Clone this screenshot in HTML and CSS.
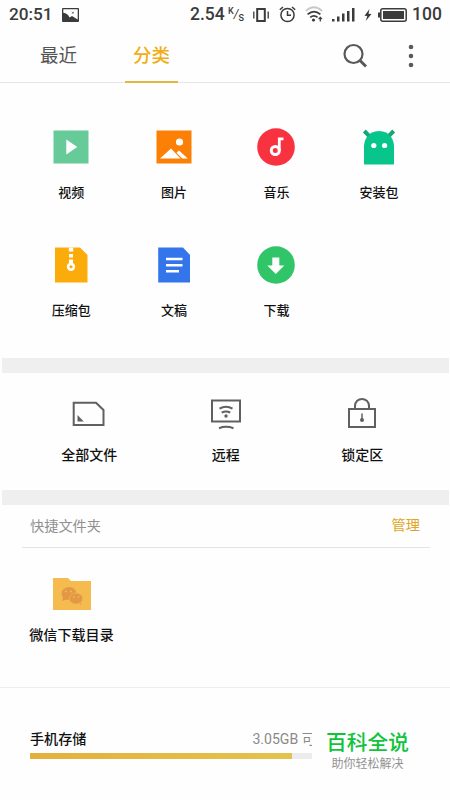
FILE: index.html
```html
<!DOCTYPE html>
<html lang="zh-CN">
<head>
<meta charset="utf-8">
<title>文件管理</title>
<link rel="stylesheet" href="styles.css">
</head>
<body>
<header class="status">
  <span class="clock">20:51</span>
  <svg class="shot" width="17" height="14" viewBox="0 0 17 14"><path fill="#3b3b3b" fill-rule="evenodd" d="M1 0h15q1 0 1 1v12q0 1-1 1H1q-1 0-1-1V1q0-1 1-1zM1.300 1.300v3.500c3 .2 5 2 6.200 4.600l2.500-1.500 5.700 3.500V1.300zM9 3.200l1.600 1.300-1.100.8 2 .2.200-2-.8.700z"/></svg>
  <span class="speed">2.54</span>
  <span class="unit"><sup>K</sup><i>/</i><sub>S</sub></span>
  <svg class="vibrate" width="16" height="16" viewBox="0 0 16 16" fill="none" stroke="#3b3b3b"><path stroke-width="2" d="M4.200 2h7.600v12H4.200z"/><path stroke-width="1.300" d="M.8 4.500v7M15.200 4.500v7"/></svg>
  <svg class="alarm" width="17" height="17" viewBox="0 0 17 17" fill="none" stroke="#3b3b3b" stroke-width="1.500"><circle cx="8.500" cy="9" r="6.600"/><path d="M8.500 5v4.300h3.500M.8 3.800 4 1M16.200 3.800 13 1"/></svg>
  <svg class="wifi" width="19" height="17" viewBox="0 0 19 17" fill="none" stroke="#3b3b3b" stroke-width="1.700"><path stroke="#c8c8c8" d="M.8 5q8-7.500 16.400 0"/><path d="M2.600 8.400q6.400-5.500 12.800 0M5.200 11.400q3.800-3 7.300 0"/><circle cx="8.500" cy="14" r="1.600" fill="#3b3b3b" stroke="none"/><path stroke-width="1.200" d="M15.300 15.500v-4M13.600 13.200l1.700-1.900 1.700 1.900"/></svg>
  <svg class="signal" width="23" height="15" viewBox="0 0 23 15" fill="#3b3b3b"><path d="M0 12h2.500v2.500H0zM5 9.500h2.500v5H5zM10 6.500h2.500v8H10zM15 4h2.500v10.500H15zM20 1h2.500v13.500H20z"/></svg>
  <svg class="bolt" width="8" height="12" viewBox="0 0 8 12"><path fill="#3b3b3b" d="M5.500 0 .5 6.800l2.800.2L1.700 12 7.500 5l-3-.3z"/></svg>
  <svg class="battery" width="29" height="14" viewBox="0 0 29 14"><rect x="2.800" y=".8" width="25.400" height="12.400" rx="2" fill="none" stroke="#3b3b3b" stroke-width="1.500"/><path fill="#3b3b3b" d="M5 3h21v8H5zM0 4.500h2v5H0z"/></svg>
  <span class="percent">100</span>
</header>
<nav class="tabs">
  <span class="tab recent">最近</span>
  <span class="tab active">分类</span>
  <svg class="search" width="26" height="26" viewBox="0 0 26 26" fill="none" stroke="#595959"><circle cx="11.500" cy="11" r="9" stroke-width="2.200"/><path d="m18 17.500 6 6" stroke-width="3"/></svg>
  <svg class="more" width="6" height="24" viewBox="0 0 6 24" fill="#595959"><circle cx="3" cy="3" r="2.300"/><circle cx="3" cy="12" r="2.300"/><circle cx="3" cy="21" r="2.300"/></svg>
</nav>
<section class="grid">
  <div class="cell"><svg width="40" height="40" viewBox="0 0 40 40"><path fill="#66ca99" d="M2.500 3.500h35v33h-35z"/><path fill="#fff" d="M15.300 12.500v15l11-7.500z"/></svg><span>视频</span></div>
  <div class="cell"><svg width="40" height="40" viewBox="0 0 40 40"><path fill="#fc8005" d="M2.500 3.500h35v33h-35z"/><g fill="#fff"><circle cx="25.500" cy="15" r="3.600"/><path d="m6 31.500 11-10 9.500 10zM22.500 25.800l2.500-2.300 8.800 8h-5.500z"/></g></svg><span>图片</span></div>
  <div class="cell"><svg width="40" height="40" viewBox="0 0 40 40"><circle cx="20" cy="20" r="18.800" fill="#f9323f"/><g fill="none" stroke="#fff" stroke-width="3"><circle cx="19.300" cy="23.500" r="4"/><path d="M23.300 24V11.800h4.200" stroke-width="2.800"/></g></svg><span>音乐</span></div>
  <div class="cell"><svg width="40" height="40" viewBox="0 0 40 40"><path fill="#08c58b" d="M5 37.500V19.500C5 13 9 4 20 4s15 9 15 15.500v18z"/><path stroke="#16a779" stroke-width="4" d="m5.300 4 4.500 4.700M34.700 4l-4.500 4.700"/><g fill="#fff"><circle cx="14.800" cy="18.500" r="2.600"/><circle cx="25.600" cy="18.500" r="2.600"/></g></svg><span>安装包</span></div>
  <div class="cell"><svg width="40" height="40" viewBox="0 0 40 40"><path fill="#fbac0b" d="M4 2.500h25l7.500 7.500v27.500H4z"/><g fill="#fff"><path d="M17.800 2.500h4.400v4h-4.400zM18 9h4v3.500h-4zM18 14.500h4v4h-4z"/><circle cx="20" cy="21.800" r="4.200"/></g><circle cx="20" cy="21.800" r="1.500" fill="#fbac0b"/></svg><span>压缩包</span></div>
  <div class="cell"><svg width="40" height="40" viewBox="0 0 40 40"><path fill="#3475eb" d="M4.200 2.500H29l7 7.500v27.500H4.200z"/><path fill="#fff" d="M12 12.800h16.500v2.500H12zM12 19h16.500v2.500H12zM12 25h13v2.500H12z"/></svg><span>文稿</span></div>
  <div class="cell"><svg width="40" height="40" viewBox="0 0 40 40"><circle cx="20" cy="20" r="18.800" fill="#31c56a"/><path fill="#fff" d="M16.300 12.500h7v8h5L19.800 29l-8.500-8.500h5z"/></svg><span>下载</span></div>
</section>
<div class="band"></div>
<section class="tools">
  <div class="tool"><svg width="36" height="36" viewBox="0 0 36 36"><path d="M2.700 6.700h22.300l7.500 7.300v15H2.700z" fill="none" stroke="#606060" stroke-width="2"/><path fill="#606060" d="M6.500 19v6.500h6.300z"/></svg><span>全部文件</span></div>
  <div class="tool"><svg width="36" height="36" viewBox="0 0 36 36" fill="none" stroke="#606060" stroke-width="2"><path d="M4 4.500h28v21H4zM11 32.200q7-2.800 14.500 0"/><path d="M11.500 12.700q6.500-4 13 0M13.700 16.700q4.300-2.500 8.600 0"/><circle cx="18" cy="20" r="1.700" fill="#606060" stroke="none"/></svg><span>远程</span></div>
  <div class="tool"><svg width="36" height="36" viewBox="0 0 36 36" fill="none" stroke="#606060" stroke-width="2"><path d="M5 13h26v18H5zM11 13v-3c0-9.500 14-9.500 14 0v3"/><path stroke-width="1.500" d="M18 17.500V24"/><circle cx="18" cy="24" r="2" fill="#606060" stroke="none"/></svg><span>锁定区</span></div>
</section>
<div class="band"></div>
<section class="shortcuts">
  <div class="head"><span>快捷文件夹</span><span class="manage">管理</span></div>
  <div class="folder">
    <svg width="38" height="32" viewBox="0 0 38 32"><path fill="#f5bb4f" d="M0 0h15l3 3h20v29H0z"/><g fill="#e29845"><ellipse cx="16" cy="15.500" rx="7.500" ry="6.500"/><path d="m10 18-.5 5 5-2zM25 23l3 4v-5z"/><ellipse cx="23" cy="20.500" rx="6.800" ry="5.600" stroke="#f5bb4f" stroke-width=".7"/></g><g fill="#f5bb4f"><circle cx="13" cy="13.500" r="1"/><circle cx="18" cy="13.500" r="1"/><circle cx="21" cy="19" r=".8"/><circle cx="25.500" cy="19" r=".8"/></g></svg>
    <span>微信下载目录</span>
  </div>
</section>
<section class="storage">
  <div class="row"><span>手机存储</span><span class="free">3.05GB 可用</span></div>
  <div class="bar"><div class="used"></div></div>
  <div class="mark"><span class="brand">百科全说</span><span class="slogan">助你轻松解决</span></div>
</section>
</body>
</html>
```

FILE: styles.css
```css
* { box-sizing: border-box; }
body {
  margin: 0;
  width: 450px;
  height: 800px;
  overflow: hidden;
  background: #fefefe;
  color: #111;
  font-family: Roboto, "Noto Sans CJK SC", sans-serif;
}
svg { display: block; flex: none; }
.status {
  display: flex;
  align-items: center;
  height: 29px;
  padding-left: 9px;
  color: #3b3b3b;
  font-size: 17.500px;
  font-weight: 500;
  line-height: 29px;
  white-space: nowrap;
}
.clock { width: 53px; font-size: 17.200px; }
.speed { width: 38px; margin-left: 111px; }
.unit { display: flex; width: 17px; height: 20px; font-size: 10px; line-height: 10px; }
.unit sup, .unit sub { font-size: 9px; line-height: 10px; vertical-align: baseline; }
.unit sup { padding-top: 1px; }
.unit i { font-size: 12px; font-weight: 400; padding-top: 4px; }
.unit sub { padding-top: 8px; }
.vibrate { margin-left: 8px; }
.alarm { margin-left: 10px; }
.wifi { margin-left: 9px; }
.signal { margin-left: 8px; }
.bolt { margin-left: 9px; }
.battery { margin-left: 6px; }
.percent { margin-left: 5px; }
.tabs {
  display: flex;
  align-items: center;
  height: 54px;
  padding-left: 32px;
  border-bottom: 1px solid #e6e6e6;
  color: #555;
  font-size: 18.500px;
}
.tab { width: 53px; height: 54px; line-height: 54px; text-align: center; }
.active { margin-left: 40px; color: #f0ae14; font-weight: 500; border-bottom: 2px solid #e2b840; }
.search { margin-left: 164px; }
.more { margin-left: 40px; }
.grid {
  display: grid;
  grid-template-columns: repeat(4, 102.600px);
  grid-auto-rows: 118px;
  height: 275px;
  padding: 44px 0 0 20px;
}
.cell, .tool { display: flex; flex-direction: column; align-items: center; font-weight: 500; }
.cell { font-size: 13px; line-height: 20px; }
.cell span { margin-top: 16px; }
.band { height: 15px; margin: 0 1px 0 2px; background: #efefef; }
.tools {
  display: grid;
  grid-template-columns: repeat(3, 136.500px);
  height: 117px;
  padding: 23px 0 0 21px;
}
.tool { font-size: 14px; line-height: 20px; }
.tool span { margin-top: 13px; }
.shortcuts { height: 183px; border-bottom: 1px solid #ededed; }
.head {
  display: flex;
  justify-content: space-between;
  height: 43px;
  margin: 0 20px 0 22px;
  padding: 0 10px 0 8px;
  border-bottom: 1px solid #e3e3e3;
  color: #909090;
  font-size: 14.200px;
  line-height: 43px;
}
.manage { color: #dfa625; line-height: 40px; }
.folder {
  display: flex;
  flex-direction: column;
  align-items: center;
  width: 102px;
  margin: 30px 0 0 20.500px;
  font-size: 14.100px;
  font-weight: 500;
  line-height: 20px;
}
.folder span { margin-top: 15px; white-space: nowrap; }
.storage { position: relative; height: 112px; padding: 41px 30px 0; }
.row { display: flex; height: 24px; font-size: 14.100px; font-weight: 500; line-height: 21px; }
.free { margin-left: 166px; color: #8a8a8a; font-weight: 400; }
.bar { height: 6px; background: #ececec; }
.used { width: 262px; height: 6px; background: linear-gradient(90deg, #e4af3d, #e3c34d); }
.mark {
  position: absolute;
  left: 312px;
  top: 30px;
  display: flex;
  flex-direction: column;
  align-items: center;
  width: 120px;
  height: 60px;
  padding: 12px 9px 0 0;
  background: #fefefe;
}
.brand { color: #0fc43b; font-size: 20.700px; font-weight: 500; line-height: 27px; }
.slogan { color: #929292; font-size: 12px; line-height: 14px; }
```
